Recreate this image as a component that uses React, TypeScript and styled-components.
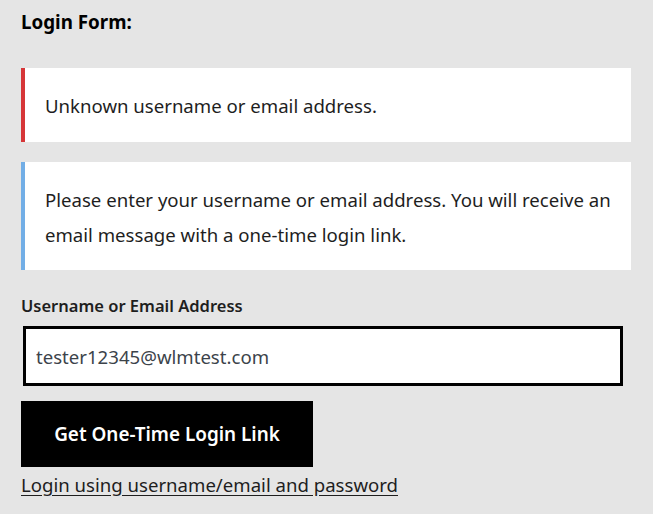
import React from 'react'
import styled, { createGlobalStyle } from 'styled-components'

const GlobalStyle = createGlobalStyle`
  body {
    margin: 0;
    background: #e5e5e5;
    font-family: "Noto Sans", "Open Sans", Arial, sans-serif;
    color: #1e1e1e;
  }
`

type Tone = 'error' | 'info'

export default function App() {
  return (
    <>
      <GlobalStyle />
      <Page>
        <Title>Login Form:</Title>

        <Notice tone="error">Unknown username or email address.</Notice>
        <Notice tone="info">
          Please enter your username or email address. You will receive an email message with a
          one-time login link.
        </Notice>

        <Form onSubmit={e => e.preventDefault()}>
          <Label htmlFor="user_login">Username or Email Address</Label>
          <Input id="user_login" type="text" defaultValue="tester12345@wlmtest.com" />
          <Submit type="submit">Get One-Time Login Link</Submit>
        </Form>

        <AltLink href="#">Login using username/email and password</AltLink>
      </Page>
    </>
  )
}

const Page = styled.div`
    width: 610px;
    padding: 10px 22px 0 21px;
`

const Title = styled.h2`
    margin: 0 0 34px;
    font-size: 18.8px;
    font-weight: 700;
    line-height: 24px;
    color: #000;
`

const Notice = styled.div<{ tone: Tone }>`
    background: #fff;
    border-left: 4px solid ${p => (p.tone === 'error' ? '#d63638' : '#72aee6')};
    padding: 20px 20px ${p => (p.tone === 'error' ? '19px' : '18px')};
    margin-bottom: 20px;
    font-size: 18.6px;
    line-height: 35px;
    color: #1e1e1e;
`

const Form = styled.form`
    display: flex;
    flex-direction: column;
    align-items: flex-start;
    margin-top: 24px;
`

const Label = styled.label`
    font-size: 16.5px;
    font-weight: 600;
    line-height: 24px;
    color: #1e1e1e;
    margin-bottom: 8px;
`

const Input = styled.input`
    box-sizing: border-box;
    width: 600px;
    height: 60px;
    margin-left: 2px;
    padding: 0 10px;
    border: 3px solid #000;
    background: #fff;
    font-family: inherit;
    font-size: 18.6px;
    color: #3c434a;
    outline: none;
`

const Submit = styled.button`
    box-sizing: border-box;
    width: 292px;
    height: 66px;
    margin-top: 15px;
    border: none;
    background: #000;
    color: #fff;
    font-family: inherit;
    font-size: 18.9px;
    font-weight: 600;
    cursor: pointer;
`

const AltLink = styled.a`
    display: inline-block;
    margin-top: 6px;
    font-size: 18.6px;
    line-height: 24px;
    color: #1e1e1e;
    text-decoration: underline;
    text-underline-offset: 3px;
`
